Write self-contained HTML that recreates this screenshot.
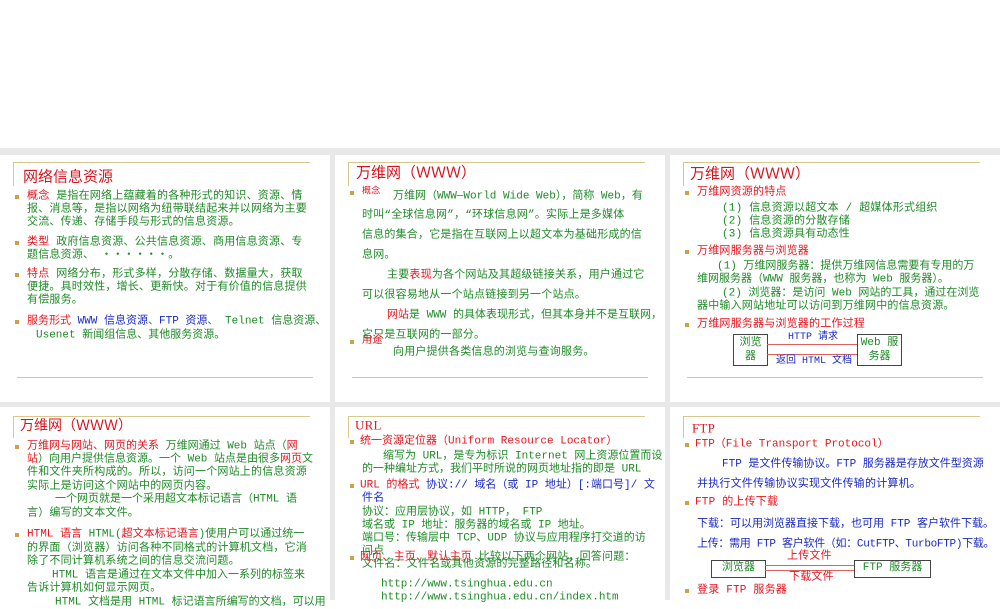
<!DOCTYPE html>
<html><head><meta charset="utf-8"><style>
body{margin:0;width:1000px;height:600px;position:relative;overflow:hidden;background:#fff;font-family:"Liberation Mono","Noto Sans CJK SC",monospace;}
.g{position:absolute;background:#e8e8e8}
.s{position:absolute;background:#fff}
.hl{position:absolute;height:1px;background:#d9c88c}
.vl{position:absolute;width:1px;background:#d9c88c}
.t{position:absolute;white-space:nowrap;line-height:1;transform:translateY(-50%);font-size:11px;color:#1f8a27;letter-spacing:0.2px}
.r{color:#e8141e}.b{color:#1a28c8}.gr{color:#1f8a27}
.ti{font-size:15px;color:#d8141e;font-family:"Liberation Sans","Noto Sans CJK SC",sans-serif;letter-spacing:0}
.bu{position:absolute;width:4px;height:4px;background:#c9a24a;transform:translateY(-50%)}
.box{position:absolute;border:1px solid #444;background:#fff;font-size:11px;text-align:center;line-height:14px}
.ar{position:absolute;height:1px;background:#e06060}
</style></head><body>
<div class="g" style="left:0;top:148px;width:1000px;height:452px"></div>
<div class="s" style="left:0;top:155px;width:330px;height:247px"></div>
<div class="s" style="left:335px;top:155px;width:330px;height:247px"></div>
<div class="s" style="left:670px;top:155px;width:330px;height:247px"></div>
<div class="s" style="left:0;top:407px;width:330px;height:193px"></div>
<div class="s" style="left:335px;top:407px;width:330px;height:193px"></div>
<div class="s" style="left:670px;top:407px;width:330px;height:193px"></div>

<!-- slide 1 -->
<div class="hl" style="left:13px;top:162px;width:297px"></div>
<div class="vl" style="left:13px;top:162px;height:24px"></div>
<div class="t ti" style="left:23px;top:177px">网络信息资源</div>
<div class="bu" style="left:15px;top:197px"></div>
<div class="t" style="left:27px;top:197px"><span class="r">概念</span> 是指在网络上蕴藏着的各种形式的知识、资源、情</div>
<div class="t" style="left:27px;top:210px">报、消息等，是指以网络为纽带联结起来并以网络为主要</div>
<div class="t" style="left:27px;top:223px">交流、传递、存储手段与形式的信息资源。</div>
<div class="bu" style="left:15px;top:243px"></div>
<div class="t" style="left:27px;top:243px"><span class="r">类型</span> 政府信息资源、公共信息资源、商用信息资源、专</div>
<div class="t" style="left:27px;top:256px">题信息资源、 ・・・・・・。</div>
<div class="bu" style="left:15px;top:275px"></div>
<div class="t" style="left:27px;top:275px"><span class="r">特点</span> 网络分布，形式多样，分散存储、数据量大，获取</div>
<div class="t" style="left:27px;top:288px">便捷。具时效性，增长、更新快。对于有价值的信息提供</div>
<div class="t" style="left:27px;top:301px">有偿服务。</div>
<div class="bu" style="left:15px;top:322px"></div>
<div class="t" style="left:27px;top:322px;letter-spacing:0"><span class="r">服务形式</span> <span class="b">WWW 信息资源</span>、<span class="b">FTP 资源</span>、 Telnet 信息资源、</div>
<div class="t" style="left:36px;top:336px;letter-spacing:0">Usenet 新闻组信息、其他服务资源。</div>
<div class="hl" style="left:17px;top:377px;width:296px"></div>

<!-- slide 2 -->
<div class="hl" style="left:348px;top:162px;width:297px"></div>
<div class="vl" style="left:348px;top:162px;height:24px"></div>
<div class="t ti" style="left:356px;top:173px">万维网（ＷＷＷ）</div>
<div class="bu" style="left:350px;top:193px"></div>
<div class="t r" style="left:362px;top:192px;font-size:9px">概念</div>
<div class="t" style="left:393px;top:197px;letter-spacing:0">万维网（WWW—World Wide Web），简称 Web，有</div>
<div class="t" style="left:362px;top:216px">时叫“全球信息网”，“环球信息网”。实际上是多媒体</div>
<div class="t" style="left:362px;top:236px">信息的集合，它是指在互联网上以超文本为基础形成的信</div>
<div class="t" style="left:362px;top:256px">息网。</div>
<div class="t" style="left:387px;top:276px">主要<span class="r">表现</span>为各个网站及其超级链接关系，用户通过它</div>
<div class="t" style="left:362px;top:296px">可以很容易地从一个站点链接到另一个站点。</div>
<div class="t" style="left:387px;top:316px;letter-spacing:0"><span class="r">网站</span>是 WWW 的具体表现形式，但其本身并不是互联网，</div>
<div class="t" style="left:362px;top:336px">它只是互联网的一部分。</div>
<div class="bu" style="left:350px;top:342px"></div>
<div class="t r" style="left:362px;top:342px;font-size:10px">用途</div>
<div class="t" style="left:393px;top:353px">向用户提供各类信息的浏览与查询服务。</div>
<div class="hl" style="left:352px;top:377px;width:296px"></div>

<!-- slide 3 -->
<div class="hl" style="left:683px;top:162px;width:297px"></div>
<div class="vl" style="left:683px;top:162px;height:24px"></div>
<div class="t ti" style="left:690px;top:174px">万维网（ＷＷＷ）</div>
<div class="bu" style="left:685px;top:193px"></div>
<div class="t r" style="left:697px;top:193px">万维网资源的特点</div>
<div class="t" style="left:722px;top:209px">(1) 信息资源以超文本 / 超媒体形式组织</div>
<div class="t" style="left:722px;top:222px">(2) 信息资源的分散存储</div>
<div class="t" style="left:722px;top:235px">(3) 信息资源具有动态性</div>
<div class="bu" style="left:685px;top:252px"></div>
<div class="t r" style="left:697px;top:252px">万维网服务器与浏览器</div>
<div class="t" style="left:717px;top:267px;letter-spacing:0">(1) 万维网服务器：提供万维网信息需要有专用的万</div>
<div class="t" style="left:697px;top:280px;letter-spacing:0">维网服务器（WWW 服务器，也称为 Web 服务器）。</div>
<div class="t" style="left:722px;top:294px;letter-spacing:0">(2) 浏览器：是访问 Web 网站的工具，通过在浏览</div>
<div class="t" style="left:697px;top:307px">器中输入网站地址可以访问到万维网中的信息资源。</div>
<div class="bu" style="left:685px;top:325px"></div>
<div class="t r" style="left:697px;top:325px">万维网服务器与浏览器的工作过程</div>
<div class="box gr" style="left:733px;top:334px;width:33px;height:29px;padding-top:1px">浏览<br>器</div>
<div class="box gr" style="left:857px;top:334px;width:43px;height:29px;padding-top:1px">Web 服<br>务器</div>
<div class="ar" style="left:767px;top:344px;width:90px"></div>
<div class="ar" style="left:767px;top:354px;width:90px"></div>
<div class="t b" style="left:788px;top:338px;font-size:10px;letter-spacing:0">HTTP 请求</div>
<div class="t b" style="left:776px;top:362px;font-size:10px;letter-spacing:0">返回 HTML 文档</div>
<div class="hl" style="left:687px;top:377px;width:296px"></div>

<!-- row2 slide 1 -->
<div class="hl" style="left:13px;top:416px;width:297px"></div>
<div class="vl" style="left:13px;top:416px;height:22px"></div>
<div class="t ti" style="left:20px;top:425px;font-size:14px">万维网（ＷＷＷ）</div>
<div class="bu" style="left:15px;top:447px"></div>
<div class="t" style="left:27px;top:447px;letter-spacing:0"><span class="r">万维网与网站、网页的关系</span>   万维网通过 Web 站点（<span class="r">网</span></div>
<div class="t" style="left:27px;top:460px;letter-spacing:0"><span class="r">站</span>）向用户提供信息资源。一个 Web 站点是由很多<span class="r">网页</span>文</div>
<div class="t" style="left:27px;top:473px">件和文件夹所构成的。所以，访问一个网站上的信息资源</div>
<div class="t" style="left:27px;top:487px">实际上是访问这个网站中的网页内容。</div>
<div class="t" style="left:55px;top:500px;letter-spacing:0">一个网页就是一个采用超文本标记语言（HTML 语</div>
<div class="t" style="left:27px;top:514px">言）编写的文本文件。</div>
<div class="bu" style="left:15px;top:535px"></div>
<div class="t" style="left:27px;top:535px;letter-spacing:0"><span class="r">HTML 语言</span>  HTML(<span class="r">超文本标记语言</span>)使用户可以通过统一</div>
<div class="t" style="left:27px;top:549px">的界面（浏览器）访问各种不同格式的计算机文档，它消</div>
<div class="t" style="left:27px;top:562px">除了不同计算机系统之间的信息交流问题。</div>
<div class="t" style="left:52px;top:576px;letter-spacing:0">HTML 语言是通过在文本文件中加入一系列的标签来</div>
<div class="t" style="left:27px;top:589px">告诉计算机如何显示网页。</div>
<div class="t" style="left:55px;top:603px;letter-spacing:0">HTML 文档是用 HTML 标记语言所编写的文档，可以用</div>

<!-- row2 slide 2 -->
<div class="hl" style="left:348px;top:416px;width:297px"></div>
<div class="vl" style="left:348px;top:416px;height:22px"></div>
<div class="t r" style="left:355px;top:425px;font-size:13px;font-family:'Liberation Serif',serif">URL</div>
<div class="bu" style="left:350px;top:442px"></div>
<div class="t r" style="left:360px;top:442px;letter-spacing:0">统一资源定位器（Uniform Resource Locator）</div>
<div class="t" style="left:383px;top:457px;letter-spacing:0">缩写为 URL，是专为标识 Internet 网上资源位置而设</div>
<div class="t" style="left:362px;top:470px;letter-spacing:0">的一种编址方式，我们平时所说的网页地址指的即是 URL</div>
<div class="bu" style="left:350px;top:486px"></div>
<div class="t" style="left:360px;top:486px;letter-spacing:0"><span class="r">URL 的格式</span>    <span class="b">协议:// 域名（或 IP 地址）[:端口号]/ 文</span></div>
<div class="t b" style="left:362px;top:499px">件名</div>
<div class="t" style="left:362px;top:513px;letter-spacing:0">协议：应用层协议，如 HTTP， FTP</div>
<div class="t" style="left:362px;top:526px;letter-spacing:0">域名或 IP 地址：服务器的域名或 IP 地址。</div>
<div class="t" style="left:362px;top:539px;letter-spacing:0">端口号：传输层中 TCP、UDP 协议与应用程序打交道的访</div>
<div class="t" style="left:362px;top:552px">问点</div>
<div class="bu" style="left:350px;top:558px"></div>
<div class="t" style="left:360px;top:558px"><span class="r">网页、主页、默认主页</span> 比较以下两个网站，回答问题：</div>
<div class="t" style="left:362px;top:565px">文件名：文件名或其他资源的完整路径和名称。</div>
<div class="t" style="left:381px;top:585px;letter-spacing:0">http://www.tsinghua.edu.cn</div>
<div class="t" style="left:381px;top:598px;letter-spacing:0">http://www.tsinghua.edu.cn/index.htm</div>

<!-- row2 slide 3 -->
<div class="hl" style="left:683px;top:416px;width:297px"></div>
<div class="vl" style="left:683px;top:416px;height:22px"></div>
<div class="t r" style="left:692px;top:428px;font-size:13px;font-family:'Liberation Serif',serif">FTP</div>
<div class="bu" style="left:685px;top:445px"></div>
<div class="t r" style="left:695px;top:445px;letter-spacing:0">FTP（File  Transport  Protocol）</div>
<div class="t b" style="left:722px;top:465px;letter-spacing:0">FTP 是文件传输协议。FTP 服务器是存放文件型资源</div>
<div class="t b" style="left:697px;top:485px">并执行文件传输协议实现文件传输的计算机。</div>
<div class="bu" style="left:685px;top:503px"></div>
<div class="t r" style="left:695px;top:503px">FTP 的上传下载</div>
<div class="t b" style="left:697px;top:525px;letter-spacing:0">下载：可以用浏览器直接下载，也可用 FTP 客户软件下载。</div>
<div class="t b" style="left:697px;top:545px;letter-spacing:-0.3px">上传：需用 FTP 客户软件（如：CutFTP、TurboFTP)下载。</div>
<div class="box gr" style="left:711px;top:560px;width:53px;height:16px">浏览器</div>
<div class="box gr" style="left:854px;top:560px;width:75px;height:16px">FTP 服务器</div>
<div class="ar" style="left:765px;top:565px;width:89px"></div>
<div class="ar" style="left:765px;top:570px;width:89px"></div>
<div class="t r" style="left:787px;top:557px">上传文件</div>
<div class="t r" style="left:789px;top:578px">下载文件</div>
<div class="bu" style="left:685px;top:591px"></div>
<div class="t r" style="left:697px;top:591px">登录 FTP 服务器</div>
</body></html>
